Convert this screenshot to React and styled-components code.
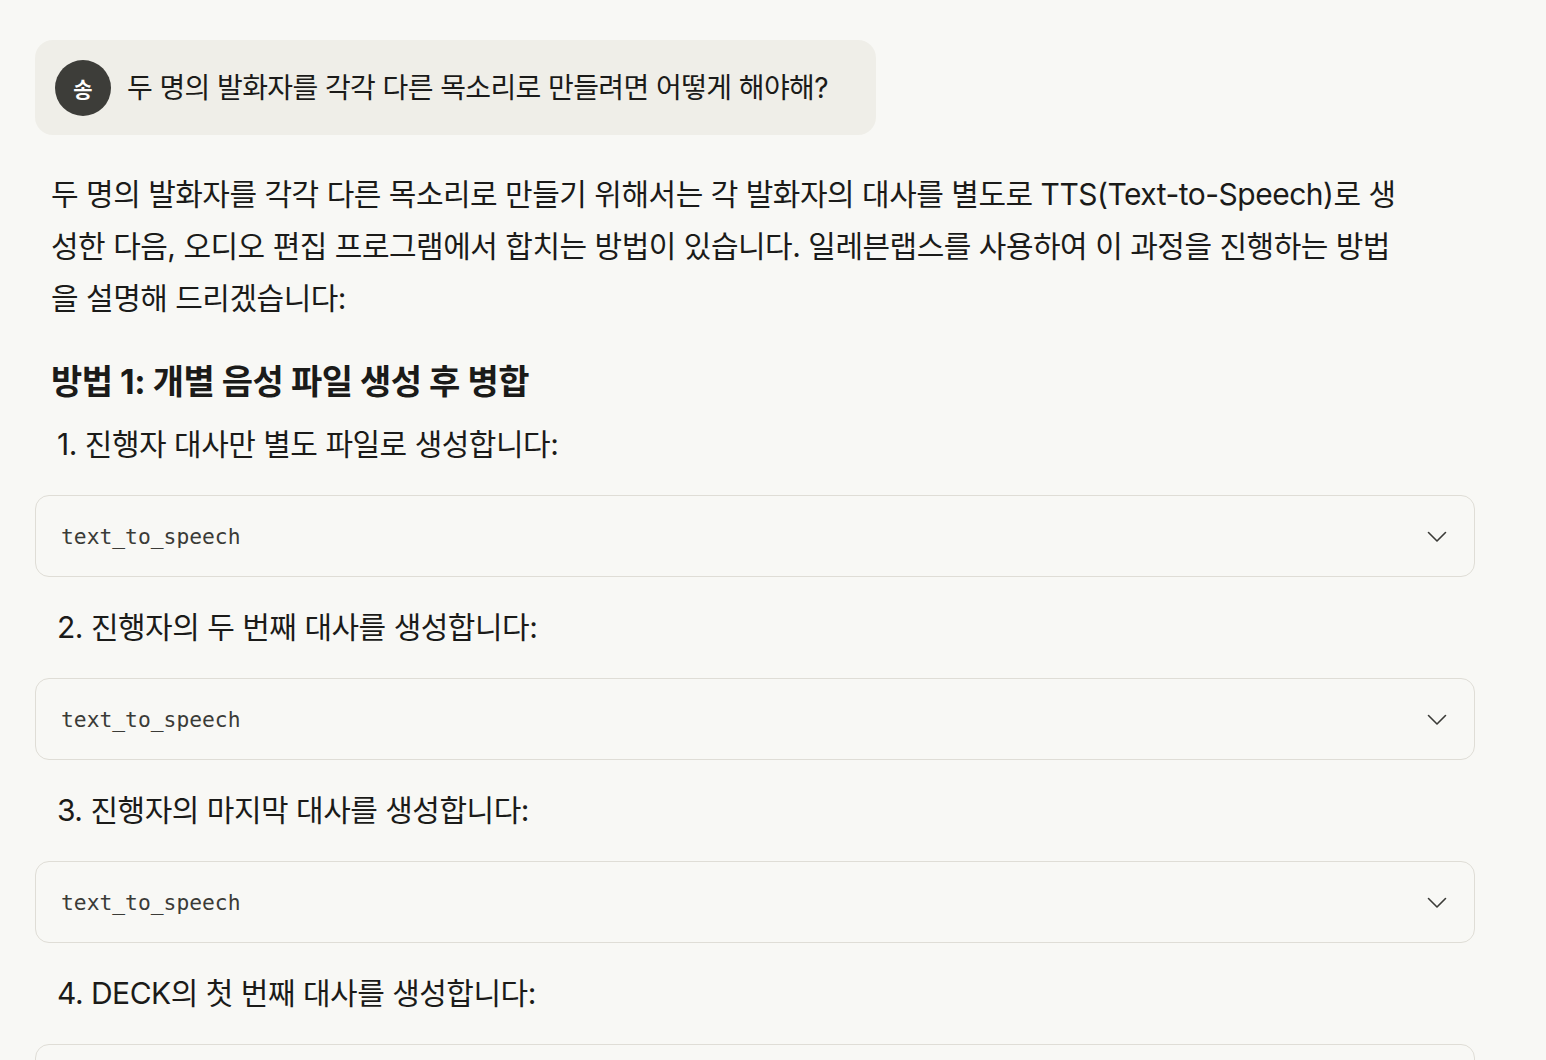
import React from "react";
import styled, { createGlobalStyle } from "styled-components";

const Global = createGlobalStyle`
  html, body { margin: 0; padding: 0; background: #f8f8f5; }
  body { font-family: "Inter", "Noto Sans CJK KR", sans-serif; color: #1b1b19; }
`;

const Page = styled.div`
  padding: 40px 0 0 35px;
  width: 1440px;
`;

const UserBubble = styled.div`
  display: inline-flex;
  align-items: center;
  gap: 16px;
  padding: 20px 48px 19px 20px;
  background: #efeee8;
  border-radius: 18px;
`;

const Avatar = styled.div`
  width: 56px;
  height: 56px;
  border-radius: 50%;
  background: #3d3d39;
  color: #fff;
  display: flex;
  align-items: center;
  justify-content: center;
  font-family: "Noto Sans CJK KR", sans-serif;
  font-size: 21px;
  font-weight: 700;
  flex-shrink: 0;
`;

const UserText = styled.div`
  font-size: 28px;
  letter-spacing: -0.6px;
  line-height: 36px;
`;

const Answer = styled.div`
  margin-top: 33px;
  display: flex;
  flex-direction: column;
`;

const Para = styled.p`
  margin: 0 0 0 16px;
  width: 1353px;
  font-size: 30px;
  letter-spacing: -0.5px;
  line-height: 52px;
`;

const Heading = styled.h3`
  margin: 36px 0 0 16px;
  font-size: 34px;
  font-weight: 700;
  letter-spacing: -0.5px;
  line-height: 44px;
`;

const Step = styled.div`
  margin: ${(p) => (p.$first ? "14px" : "24px")} 0 0 22px;
  font-size: 30px;
  letter-spacing: -0.5px;
  line-height: 52px;
`;

const CodeBlock = styled.div`
  margin-top: 25px;
  height: 82px;
  box-sizing: border-box;
  border: 1px solid #dfddd6;
  border-radius: 14px;
  background: #f8f8f5;
  display: flex;
  align-items: center;
  justify-content: space-between;
  padding: 0 25px 0 25px;
`;

const CodeName = styled.span`
  font-family: "DejaVu Sans Mono", monospace;
  font-size: 21.3px;
  color: #3b3b37;
`;

const Chevron = () => (
  <svg width="24" height="24" viewBox="0 0 24 24" fill="none" stroke="#3b3b37" strokeWidth="1.6" strokeLinecap="round" strokeLinejoin="round">
    <path d="M3.5 8.5 L12 17 L20.5 8.5" />
  </svg>
);

const steps = [
  "진행자 대사만 별도 파일로 생성합니다:",
  "진행자의 두 번째 대사를 생성합니다:",
  "진행자의 마지막 대사를 생성합니다:",
  "DECK의 첫 번째 대사를 생성합니다:",
];

export default function App() {
  return (
    <Page>
      <Global />
      <UserBubble>
        <Avatar>송</Avatar>
        <UserText>두 명의 발화자를 각각 다른 목소리로 만들려면 어떻게 해야해?</UserText>
      </UserBubble>
      <Answer>
        <Para>
          두 명의 발화자를 각각 다른 목소리로 만들기 위해서는 각 발화자의 대사를 별도로 TTS(Text-to-Speech)로 생성한 다음, 오디오 편집 프로그램에서 합치는 방법이 있습니다. 일레븐랩스를 사용하여 이 과정을 진행하는 방법을 설명해 드리겠습니다:
        </Para>
        <Heading>방법 1: 개별 음성 파일 생성 후 병합</Heading>
        {steps.map((s, i) => (
          <React.Fragment key={i}>
            <Step $first={i === 0}>
              {i + 1}. {s}
            </Step>
            <CodeBlock>
              <CodeName>text_to_speech</CodeName>
              <Chevron />
            </CodeBlock>
          </React.Fragment>
        ))}
      </Answer>
    </Page>
  );
}
